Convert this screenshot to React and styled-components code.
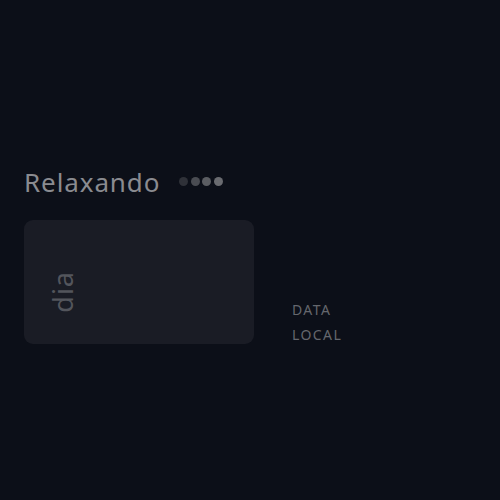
import React from "react";
import styled, { createGlobalStyle } from "styled-components";

const Global = createGlobalStyle`
  html, body { margin: 0; padding: 0; background: #0c0f18; }
  body { font-family: "Noto Sans", "DejaVu Sans", sans-serif; }
`;

const Page = styled.div`
  width: 500px;
  height: 500px;
  background: #0c0f18;
  box-sizing: border-box;
  padding: 163px 24px 0 24px;
  display: flex;
  flex-direction: column;
  gap: 20px;
`;

const Header = styled.div`
  display: flex;
  align-items: center;
  gap: 19px;
  height: 37px;
`;

const Title = styled.h1`
  margin: 0;
  font-weight: 400;
  font-size: 26px;
  color: #8a8b90;
  letter-spacing: 0.9px;
`;

const Dots = styled.div`
  display: flex;
  align-items: center;
  gap: 2.5px;
  margin-top: 0px;
`;

const Dot = styled.span`
  width: 9px;
  height: 9px;
  border-radius: 50%;
  background: ${(p) => p.$c};
`;

const Row = styled.div`
  display: flex;
  align-items: flex-end;
  gap: 38px;
`;

const Card = styled.div`
  width: 230px;
  height: 124px;
  border-radius: 9px;
  background: #1a1c25;
  display: flex;
  align-items: center;
  padding-left: 25px;
  padding-top: 20px;
  box-sizing: border-box;
`;

const Vertical = styled.span`
  writing-mode: vertical-rl;
  transform: rotate(180deg);
  font-size: 27px;
  letter-spacing: 1px;
  color: #53555c;
  line-height: 1;
`;

const Labels = styled.div`
  display: flex;
  flex-direction: column;
  gap: 7px;
`;

const Label = styled.span`
  font-size: 14px;
  color: #65676d;
  letter-spacing: 1.4px;
  line-height: 18px;
`;

export default function App() {
  return (
    <>
      <Global />
      <Page>
        <Header>
          <Title>Relaxando</Title>
          <Dots>
            <Dot $c="#2f3138" />
            <Dot $c="#4a4c52" />
            <Dot $c="#5b5d62" />
            <Dot $c="#6a6b70" />
          </Dots>
        </Header>
        <Row>
          <Card>
            <Vertical>dia</Vertical>
          </Card>
          <Labels>
            <Label>DATA</Label>
            <Label>LOCAL</Label>
          </Labels>
        </Row>
      </Page>
    </>
  );
}
